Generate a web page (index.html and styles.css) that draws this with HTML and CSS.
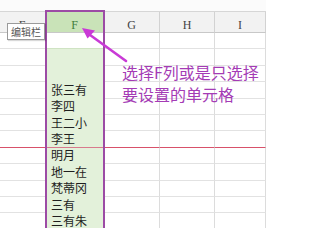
FILE: index.html
```html
<!DOCTYPE html>
<html>
<head>
<meta charset="utf-8">
<link rel="stylesheet" href="styles.css">
</head>
<body>
<div class="sheet">
  <div class="topbar"></div>
  <div class="grid">
    <div class="hd">E</div><div class="hd hd-sel">F</div><div class="hd">G</div><div class="hd">H</div><div class="hd">I</div>

    <div class="c"></div><div class="c f active"></div><div class="c"></div><div class="c"></div><div class="c"></div>
    <div class="c"></div><div class="c f"></div><div class="c"></div><div class="c"></div><div class="c"></div>
    <div class="c"></div><div class="c f"></div><div class="c"></div><div class="c"></div><div class="c"></div>
    <div class="c"></div><div class="c f">张三有</div><div class="c"></div><div class="c"></div><div class="c"></div>
    <div class="c"></div><div class="c f">李四</div><div class="c"></div><div class="c"></div><div class="c"></div>
    <div class="c"></div><div class="c f">王二小</div><div class="c"></div><div class="c"></div><div class="c"></div>
    <div class="c red"></div><div class="c f red">李王</div><div class="c red"></div><div class="c red"></div><div class="c red"></div>
    <div class="c"></div><div class="c f">明月</div><div class="c"></div><div class="c"></div><div class="c"></div>
    <div class="c"></div><div class="c f">地一在</div><div class="c"></div><div class="c"></div><div class="c"></div>
    <div class="c"></div><div class="c f">梵蒂冈</div><div class="c"></div><div class="c"></div><div class="c"></div>
    <div class="c"></div><div class="c f">三有</div><div class="c"></div><div class="c"></div><div class="c"></div>
    <div class="c"></div><div class="c f">三有朱</div><div class="c"></div><div class="c"></div><div class="c"></div>
    <div class="c"></div><div class="c f"></div><div class="c"></div><div class="c"></div><div class="c"></div>
  </div>

  <div class="selection"></div>
  <div class="tooltip">编辑栏</div>

  <svg class="arrow" width="266" height="228" viewBox="0 0 266 228">
    <path d="M126 61 L88 33.5" stroke="#c93ad6" stroke-width="2.6" stroke-linecap="round" fill="none"/>
    <path d="M82 28 L95 30.5 L87.5 38.5 Z" fill="#c93ad6"/>
  </svg>

  <div class="note">
    <div>选择F列或是只选择</div>
    <div>要设置的单元格</div>
  </div>
</div>
</body>
</html>
```

FILE: styles.css
```css
html, body {
  margin: 0;
  padding: 0;
  background: #ffffff;
}

.sheet {
  position: relative;
  width: 266px;
  height: 228px;
  overflow: hidden;
  background: #ffffff;
  font-family: "Noto Sans CJK SC", "Noto Sans", sans-serif;
}

.topbar {
  height: 12px;
  background: #fbfbfb;
  border-bottom: 1px solid #d6d6d6;
  box-sizing: border-box;
}

.grid {
  display: grid;
  grid-template-columns: 46px 58px 56px 55px 1fr;
  grid-template-rows: 21px repeat(13, 16.4px);
}

.hd {
  background: #f2f2f2;
  border-right: 1px solid #d2d2d2;
  border-bottom: 1px solid #c8c8c8;
  box-sizing: border-box;
  font-family: "Liberation Serif", "DejaVu Serif", serif;
  font-size: 12px;
  line-height: 1;
  color: #444;
  display: flex;
  align-items: center;
  justify-content: center;
  padding-top: 5px;
}

.hd-sel {
  background: #c9e3b8;
  color: #3f7d3a;
}

.c {
  border-right: 1px solid #dcdcdc;
  border-bottom: 1px solid #e2e2e2;
  box-sizing: border-box;
  font-size: 12px;
  line-height: 1;
  color: #1e1e1e;
  display: flex;
  align-items: center;
  padding-left: 4px;
}

.c.f {
  background: #e3f1da;
  border-bottom-color: #e3f1da;
  padding-left: 5px;
}

.c.f.active {
  background: #ffffff;
  border-bottom: 1px solid #cfe3c3;
}

.c.red {
  border-bottom: 1px solid #d8516a;
}

.c.f.red {
  border-bottom-color: #d87a8c;
}

.selection {
  position: absolute;
  left: 45px;
  top: 10px;
  width: 60px;
  height: 240px;
  box-sizing: border-box;
  border: 2.5px solid #9c4ba5;
}

.tooltip {
  position: absolute;
  left: 7px;
  top: 23px;
  width: 38px;
  height: 17px;
  box-sizing: border-box;
  background: #ffffff;
  border: 1px solid #9a9a9a;
  box-shadow: 1px 1px 1px rgba(0,0,0,0.15);
  font-size: 10px;
  color: #555;
  display: flex;
  align-items: center;
  justify-content: center;
  line-height: 1;
}

.arrow {
  position: absolute;
  left: 0;
  top: 0;
}

.note {
  position: absolute;
  left: 122px;
  top: 61px;
  font-size: 16px;
  line-height: 22px;
  color: #a43bb5;
  white-space: nowrap;
}
```
